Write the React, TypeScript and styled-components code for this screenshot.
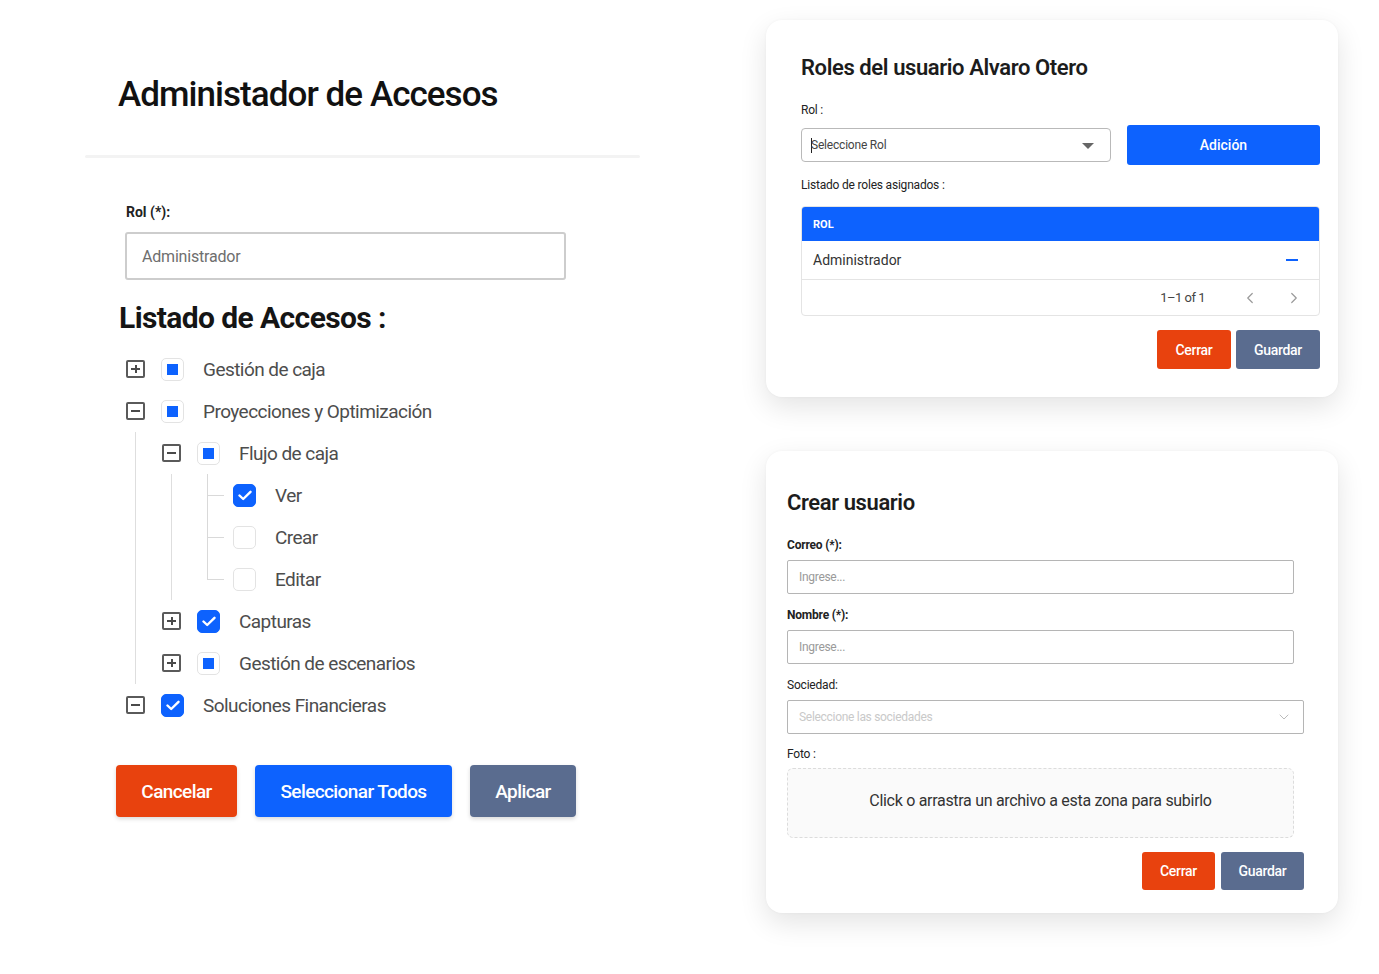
import styled, { createGlobalStyle } from "styled-components";
import { ChevronLeft, ChevronRight, ChevronDown } from "lucide-react";

const GlobalStyle = createGlobalStyle`
    html, body {
        margin: 0;
        padding: 0;
        background: #ffffff;
    }
    body {
        font-family: Roboto, "Liberation Sans", sans-serif;
        color: #222;
    }
    * {
        box-sizing: border-box;
    }
`

const Page = styled.div`
    width: 1379px;
    height: 974px;
    display: flex;
    align-items: flex-start;
    overflow: hidden;
`

const LeftPanel = styled.section`
    flex: none;
    width: 766px;
    padding-top: 72px;
`

const PageTitle = styled.h1`
    margin: 0 0 0 118px;
    font-size: 35px;
    line-height: 46px;
    font-weight: 500;
    letter-spacing: -0.95px;
    color: #111;
`

const Divider = styled.div`
    margin: 37px 0 0 85px;
    width: 555px;
    height: 3px;
    background: #f3f3f3;
    border-radius: 2px;
`

const AccessForm = styled.div`
    padding-left: 119px;
    display: flex;
    flex-direction: column;
    align-items: flex-start;
`

const RolLabel = styled.label`
    margin: 45px 0 0 7px;
    font-size: 14px;
    line-height: 18px;
    font-weight: 700;
    color: #222;
`

const RolInput = styled.div`
    margin: 11px 0 0 6px;
    width: 441px;
    height: 48px;
    border: 2px solid #cdcdcd;
    border-radius: 3px;
    display: flex;
    align-items: center;
    padding-left: 15px;
    font-size: 16px;
    color: #6e6e6e;
    letter-spacing: -0.2px;
`

const SectionTitle = styled.h2`
    margin: 20px 0 0 0;
    font-size: 30px;
    line-height: 36px;
    font-weight: 700;
    letter-spacing: -0.6px;
    color: #151515;
`

const Tree = styled.div`
    margin: 12px 0 0 7px;
`

const Row = styled.div`
    height: 42px;
    display: flex;
    align-items: center;
`

const Expander = styled.span<{ $open: boolean }>`
    flex: none;
    position: relative;
    width: 19px;
    height: 18px;
    border: 2px solid #5a5a5a;
    border-radius: 2px;
    &::before {
        content: "";
        position: absolute;
        left: 3px;
        right: 3px;
        top: 6px;
        height: 2px;
        background: #4a4a4a;
    }
    &::after {
        content: "";
        display: ${(p) => (p.$open ? "none" : "block")};
        position: absolute;
        top: 3px;
        bottom: 3px;
        left: 6.5px;
        width: 2px;
        background: #4a4a4a;
    }
`

const LeafSwitch = styled.span<{ $last: boolean }>`
    flex: none;
    position: relative;
    width: 19px;
    height: 42px;
    &::before {
        content: "";
        position: absolute;
        left: 9px;
        top: 0;
        height: ${(p) => (p.$last ? "21px" : "42px")};
        width: 1px;
        background: #d9d9d9;
    }
    &::after {
        content: "";
        position: absolute;
        left: 9px;
        top: 21px;
        width: 17px;
        height: 1px;
        background: #d9d9d9;
    }
`

const Check = styled.span<{ $state: "checked" | "partial" | "empty" }>`
    flex: none;
    margin-left: 16px;
    width: 23px;
    height: 23px;
    border-radius: 5px;
    border: 1px solid ${(p) => (p.$state === "checked" ? "#0d62fe" : "#e3e3e3")};
    background: ${(p) => (p.$state === "checked" ? "#0d62fe" : "#fff")};
    display: flex;
    align-items: center;
    justify-content: center;
    &::after {
        content: "";
        display: ${(p) => (p.$state === "partial" ? "block" : "none")};
        width: 11px;
        height: 11px;
        background: #0d62fe;
    }
`

const NodeLabel = styled.span`
    margin-left: 19px;
    font-size: 19px;
    letter-spacing: -0.55px;
    color: #4d4d4d;
`

const Children = styled.div`
    margin-left: 9px;
    padding-left: 26px;
    border-left: 1px solid #dedede;
`

const ButtonRow = styled.div<{ $gap: number }>`
    display: flex;
    gap: ${(p) => p.$gap}px;
    justify-content: flex-end;
`

const BigButtons = styled(ButtonRow)`
    margin: 39px 0 0 -3px;
    justify-content: flex-start;
`

const tones = {
    red: "#e8420e",
    blue: "#0d62fe",
    slate: "#5a6c8f",
}

const BigButton = styled.button<{ $tone: keyof typeof tones; $w: number }>`
    width: ${(p) => p.$w}px;
    height: 52px;
    border: none;
    border-radius: 4px;
    background: ${(p) => tones[p.$tone]};
    color: #fff;
    font-family: inherit;
    font-size: 19px;
    font-weight: 500;
    letter-spacing: -0.6px;
    box-shadow: 0 2px 4px rgba(0, 0, 0, 0.15);
`

const RightColumn = styled.div`
    flex: none;
    width: 572px;
    padding-top: 20px;
    display: flex;
    flex-direction: column;
    gap: 54px;
`

const Card = styled.div<{ $pad: string }>`
    background: #fff;
    border-radius: 16px;
    box-shadow: 0 10px 28px rgba(0, 0, 0, 0.11), 0 0 3px rgba(0, 0, 0, 0.04);
    padding: ${(p) => p.$pad};
    display: flex;
    flex-direction: column;
    align-items: flex-start;
`

const CardTitle = styled.h3`
    margin: 0;
    font-size: 22px;
    line-height: 28px;
    font-weight: 600;
    letter-spacing: -0.4px;
    color: #1c1c1c;
`

const FieldLabel = styled.div<{ $bold?: boolean; $top: number }>`
    margin-top: ${(p) => p.$top}px;
    font-size: 12px;
    line-height: 16px;
    font-weight: ${(p) => (p.$bold ? 700 : 400)};
    letter-spacing: -0.2px;
    color: #222;
`

const SelectRow = styled.div`
    margin-top: 7px;
    display: flex;
    align-items: center;
    gap: 16px;
`

const RolSelect = styled.div`
    position: relative;
    width: 310px;
    height: 34px;
    border: 1px solid #b9b9b9;
    border-radius: 4px;
    display: flex;
    align-items: center;
    padding-left: 9px;
    font-size: 12px;
    color: #444;
    letter-spacing: -0.2px;
    &::after {
        content: "";
        position: absolute;
        right: 16px;
        top: 14px;
        border-left: 6px solid transparent;
        border-right: 6px solid transparent;
        border-top: 6px solid #666;
    }
`

const TextCaret = styled.span`
    width: 1px;
    height: 15px;
    background: #222;
    margin-right: -1px;
`

const AddButton = styled.button`
    width: 193px;
    height: 40px;
    border: none;
    border-radius: 3px;
    background: #0d62fe;
    color: #fff;
    font-family: inherit;
    font-size: 14px;
    font-weight: 500;
`

const Table = styled.div`
    margin-top: 13px;
    width: 519px;
    border: 1px solid #e4e4e4;
    border-radius: 4px;
    overflow: hidden;
`

const TableHead = styled.div`
    height: 34px;
    background: #0d62fe;
    color: #fff;
    font-size: 11px;
    font-weight: 700;
    display: flex;
    align-items: center;
    padding-left: 11px;
`

const TableRow = styled.div`
    height: 39px;
    display: flex;
    align-items: center;
    justify-content: space-between;
    padding: 0 21px 0 11px;
    border-bottom: 1px solid #e4e4e4;
    font-size: 14px;
    color: #333;
`

const MinusMark = styled.span`
    width: 12px;
    height: 2px;
    background: #0d62fe;
`

const TableFooter = styled.div`
    height: 35px;
    display: flex;
    align-items: center;
    justify-content: flex-end;
    padding-right: 16px;
    font-size: 13px;
    letter-spacing: -0.5px;
    color: #444;
`

const PageInfo = styled.span`
    margin-right: 36px;
`

const PagerIcon = styled.span`
    display: flex;
    color: #9a9a9a;
    & + & {
        margin-left: 26px;
    }
`

const SmallButtons = styled(ButtonRow)<{ $top: number; $width: number }>`
    margin-top: ${(p) => p.$top}px;
    width: ${(p) => p.$width}px;
`

const SmallButton = styled.button<{ $tone: keyof typeof tones; $w: number; $h: number }>`
    width: ${(p) => p.$w}px;
    height: ${(p) => p.$h}px;
    border: none;
    border-radius: 3px;
    background: ${(p) => tones[p.$tone]};
    color: #fff;
    font-family: inherit;
    font-size: 14px;
    font-weight: 500;
    letter-spacing: -0.3px;
`

const TextInput = styled.div<{ $w: number }>`
    margin-top: 7px;
    width: ${(p) => p.$w}px;
    height: 34px;
    border: 1px solid #b5b5b5;
    border-radius: 2px;
    display: flex;
    align-items: center;
    justify-content: space-between;
    padding: 0 11px;
    font-size: 12px;
    color: #9a9a9a;
    letter-spacing: -0.3px;
`

const FaintText = styled.span`
    color: #c9c9c9;
`

const DropZone = styled.div`
    margin-top: 6px;
    width: 507px;
    height: 70px;
    padding-bottom: 5px;
    border: 1px dashed #dcdcdc;
    border-radius: 6px;
    background: #fafafa;
    display: flex;
    align-items: center;
    justify-content: center;
    font-size: 16px;
    letter-spacing: -0.3px;
    color: #333;
`

type CheckState = "checked" | "partial" | "empty";

interface TreeNode {
    label: string;
    state: CheckState;
    open?: boolean;
    children?: TreeNode[];
    leaf?: boolean;
}

const treeData: TreeNode[] = [
    { label: "Gestión de caja", state: "partial" },
    {
        label: "Proyecciones y Optimización",
        state: "partial",
        open: true,
        children: [
            {
                label: "Flujo de caja",
                state: "partial",
                open: true,
                children: [
                    { label: "Ver", state: "checked", leaf: true },
                    { label: "Crear", state: "empty", leaf: true },
                    { label: "Editar", state: "empty", leaf: true },
                ],
            },
            { label: "Capturas", state: "checked" },
            { label: "Gestión de escenarios", state: "partial" },
        ],
    },
    { label: "Soluciones Financieras", state: "checked", open: true },
]

function TreeItems({ nodes }: { nodes: TreeNode[] }) {
    return (
        <>
            {nodes.map((node, i) => (
                <div key={node.label}>
                    <Row>
                        {node.leaf ? (
                            <LeafSwitch $last={i === nodes.length - 1} />
                        ) : (
                            <Expander $open={!!node.open} />
                        )}
                        <Check $state={node.state}>
                            {node.state === "checked" && (
                                <svg width="14" height="11" viewBox="0 0 14 11">
                                    <polyline points="1.5,5.5 5.2,9 12.5,1.8" fill="none" stroke="#fff" strokeWidth="2.4" strokeLinecap="round" strokeLinejoin="round" />
                                </svg>
                            )}
                        </Check>
                        <NodeLabel>{node.label}</NodeLabel>
                    </Row>
                    {node.children && (
                        <Children>
                            <TreeItems nodes={node.children} />
                        </Children>
                    )}
                </div>
            ))}
        </>
    )
}

function App() {
    return (
        <Page>
            <GlobalStyle />
            <LeftPanel>
                <PageTitle>Administador de Accesos</PageTitle>
                <Divider />
                <AccessForm>
                    <RolLabel>Rol (*):</RolLabel>
                    <RolInput>Administrador</RolInput>
                    <SectionTitle>Listado de Accesos :</SectionTitle>
                    <Tree>
                        <TreeItems nodes={treeData} />
                    </Tree>
                    <BigButtons $gap={18}>
                        <BigButton $tone="red" $w={121}>Cancelar</BigButton>
                        <BigButton $tone="blue" $w={197}>Seleccionar Todos</BigButton>
                        <BigButton $tone="slate" $w={106}>Aplicar</BigButton>
                    </BigButtons>
                </AccessForm>
            </LeftPanel>

            <RightColumn>
                <Card $pad="34px 18px 28px 35px">
                    <CardTitle>Roles del usuario Alvaro Otero</CardTitle>
                    <FieldLabel $top={20}>Rol :</FieldLabel>
                    <SelectRow>
                        <RolSelect>
                            <TextCaret />
                            Seleccione Rol
                        </RolSelect>
                        <AddButton>Adición</AddButton>
                    </SelectRow>
                    <FieldLabel $top={12}>Listado de roles asignados :</FieldLabel>
                    <Table>
                        <TableHead>ROL</TableHead>
                        <TableRow>
                            Administrador
                            <MinusMark />
                        </TableRow>
                        <TableFooter>
                            <PageInfo>1–1 of 1</PageInfo>
                            <PagerIcon><ChevronLeft size={18} strokeWidth={1.6} /></PagerIcon>
                            <PagerIcon><ChevronRight size={18} strokeWidth={1.6} /></PagerIcon>
                        </TableFooter>
                    </Table>
                    <SmallButtons $gap={5} $top={14} $width={519}>
                        <SmallButton $tone="red" $w={74} $h={39}>Cerrar</SmallButton>
                        <SmallButton $tone="slate" $w={84} $h={39}>Guardar</SmallButton>
                    </SmallButtons>
                </Card>

                <Card $pad="38px 18px 23px 21px">
                    <CardTitle>Crear usuario</CardTitle>
                    <FieldLabel $bold $top={20}>Correo (*):</FieldLabel>
                    <TextInput $w={507}>Ingrese...</TextInput>
                    <FieldLabel $bold $top={13}>Nombre (*):</FieldLabel>
                    <TextInput $w={507}>Ingrese...</TextInput>
                    <FieldLabel $top={13}>Sociedad:</FieldLabel>
                    <TextInput $w={517}>
                        <FaintText>Seleccione las sociedades</FaintText>
                        <ChevronDown size={16} strokeWidth={1.2} color="#aaa" />
                    </TextInput>
                    <FieldLabel $top={12}>Foto :</FieldLabel>
                    <DropZone>Click o arrastra un archivo a esta zona para subirlo</DropZone>
                    <SmallButtons $gap={6} $top={14} $width={517}>
                        <SmallButton $tone="red" $w={73} $h={38}>Cerrar</SmallButton>
                        <SmallButton $tone="slate" $w={83} $h={38}>Guardar</SmallButton>
                    </SmallButtons>
                </Card>
            </RightColumn>
        </Page>
    )
}

export default App;
